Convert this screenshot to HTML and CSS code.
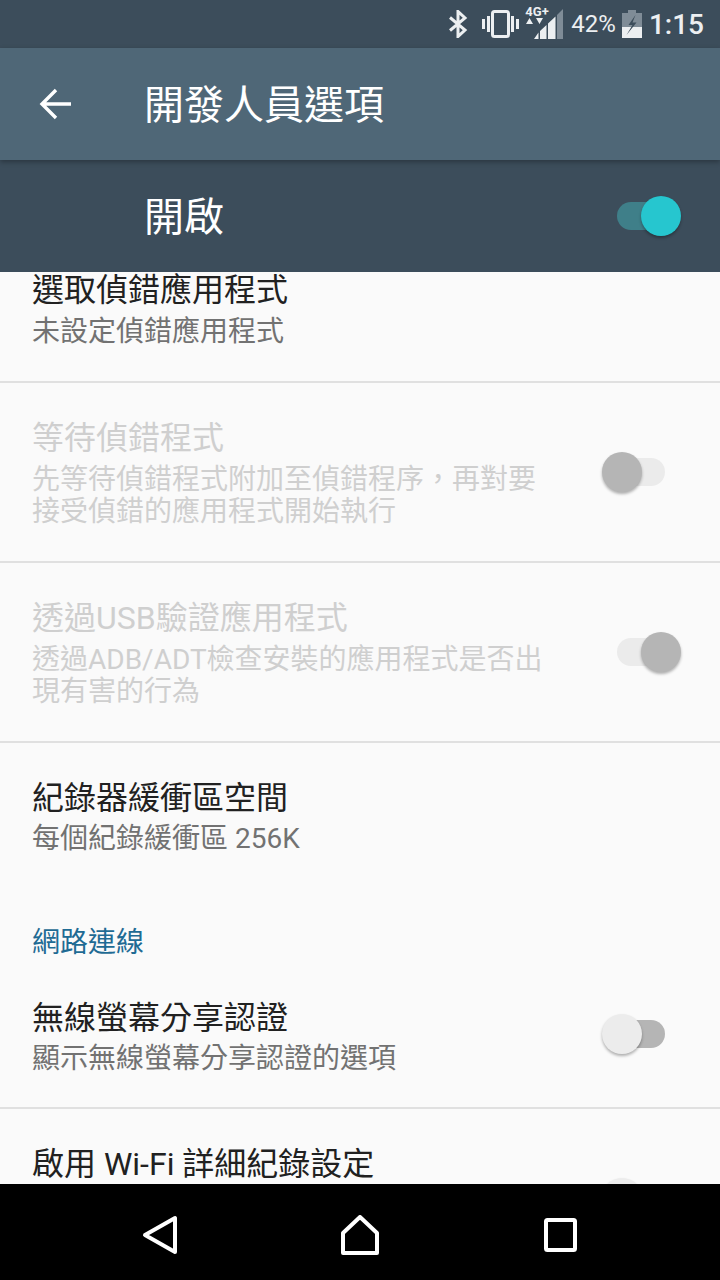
FILE: index.html
```html
<!DOCTYPE html>
<html>
<head>
<meta charset="utf-8"/>
<title>開發人員選項</title>
<link rel="stylesheet" href="styles.css">
</head>
<body>

<div class="statusbar">
	<svg class="ic-bt" width="20" height="28" viewBox="0 0 20 28"><path d="M2 7.500L17 20L10 26.500V1.500L17 8L2 20.500" fill="none" stroke="#eceff1" stroke-width="3"/></svg>
	<svg class="ic-vib" width="37" height="28" viewBox="0 0 37 28"><rect x="10.500" y="1.500" width="16" height="25" rx="2" fill="none" stroke="#eceff1" stroke-width="3"/><path d="M0 9h3v10H0zM5 6h3v16H5zM29 6h3v16h-3zM34 9h3v10h-3z" fill="#eceff1"/></svg>
	<div class="ic-net">
		<span class="net-label">4G+</span>
		<svg width="38" height="32" viewBox="0 0 38 32"><path d="M38 1V31H32V7z" fill="#7f8c97"/><path d="M30.500 8.500V31H23V15.500zM21.500 17V31H15V23zM13.500 24.500V31H9z" fill="#eceff1"/><path d="M1 16L4.500 10L8 16zM11 10L14.500 16L18 10z" fill="#eceff1"/></svg>
	</div>
	<span class="batt-pct">42%</span>
	<svg class="ic-batt" width="20" height="28" viewBox="0 0 20 28"><path d="M6 0h8v3h6v25H0V3h6z" fill="#7f8c97"/><path d="M0 17H20V28H0z" fill="#eceff1"/><path d="M13.500 5L6.500 15H10.500L4.500 25L14.500 12.500H10.500z" fill="#3c4d5b"/></svg>
	<span class="clock">1:15</span>
</div>

<div class="appbar">
	<svg class="ic-back" width="34" height="34" viewBox="0 0 34 34"><path d="M32 17H4M17 3L3 17L17 31" fill="none" stroke="#fff" stroke-width="3.400"/></svg>
	<span class="appbar-title">開發人員選項</span>
</div>

<div class="masterbar">
	<span class="master-label">開啟</span>
	<div class="switch on"><div class="thumb"></div></div>
</div>

<div class="list">
	<div class="list-inner">
		<div class="row">
			<div class="row-text">
				<div class="row-title">選取偵錯應用程式</div>
				<div class="row-sub">未設定偵錯應用程式</div>
			</div>
		</div>
		<div class="row disabled">
			<div class="row-text">
				<div class="row-title">等待偵錯程式</div>
				<div class="row-sub">先等待偵錯程式附加至偵錯程序，再對要接受偵錯的應用程式開始執行</div>
			</div>
			<div class="switch off"><div class="thumb"></div></div>
		</div>
		<div class="row disabled">
			<div class="row-text">
				<div class="row-title">透過USB驗證應用程式</div>
				<div class="row-sub">透過ADB/ADT檢查安裝的應用程式是否出現有害的行為</div>
			</div>
			<div class="switch on"><div class="thumb"></div></div>
		</div>
		<div class="row last">
			<div class="row-text">
				<div class="row-title">紀錄器緩衝區空間</div>
				<div class="row-sub">每個紀錄緩衝區 256K</div>
			</div>
		</div>
		<div class="category">網路連線</div>
		<div class="row short">
			<div class="row-text">
				<div class="row-title">無線螢幕分享認證</div>
				<div class="row-sub">顯示無線螢幕分享認證的選項</div>
			</div>
			<div class="switch off"><div class="thumb"></div></div>
		</div>
		<div class="row tall">
			<div class="row-text">
				<div class="row-title">啟用 Wi-Fi 詳細紀錄設定</div>
			</div>
			<div class="switch off"><div class="thumb"></div></div>
		</div>
	</div>
</div>

<div class="navbar">
	<svg width="36" height="40" viewBox="0 0 36 40"><path d="M33 3V37L3 20z" fill="none" stroke="#fff" stroke-width="4" stroke-linejoin="round"/></svg>
	<svg width="38" height="40" viewBox="0 0 38 40"><path d="M19 2L36 18V38H2V18z" fill="none" stroke="#fff" stroke-width="4" stroke-linejoin="round"/></svg>
	<svg width="34" height="34" viewBox="0 0 34 34"><rect x="3" y="2" width="29" height="30" rx="1.500" fill="none" stroke="#fff" stroke-width="4"/></svg>
</div>

</body>
</html>
```

FILE: styles.css
```css
html, body {
	margin: 0;
	padding: 0;
}
body {
	width: 720px;
	height: 1280px;
	overflow: hidden;
	display: flex;
	flex-direction: column;
	background: #fafafa;
	font-family: Roboto, "Noto Sans CJK TC", sans-serif;
}

/* status bar */
.statusbar {
	height: 48px;
	flex: none;
	display: flex;
	align-items: center;
	justify-content: flex-end;
	padding-right: 16px;
	background: #3c4d5b;
	color: #eceff1;
}
.ic-bt {
	margin-right: 14px;
}
.ic-vib {
	margin-right: 6px;
}
.ic-net {
	position: relative;
	width: 38px;
	height: 32px;
	margin-right: 8px;
}
.ic-net svg {
	display: block;
}
.net-label {
	position: absolute;
	left: 0;
	top: -4px;
	font-size: 13px;
	font-weight: 700;
	line-height: 15px;
}
.batt-pct {
	font-size: 24px;
	margin-right: 6px;
}
.clock {
	font-size: 28px;
	font-weight: 500;
	margin-left: 7px;
}

/* app bar */
.appbar {
	height: 112px;
	flex: none;
	display: flex;
	align-items: center;
	position: relative;
	z-index: 2;
	background: #4f6777;
	box-shadow: 0 2px 5px rgba(0, 0, 0, .3);
	color: #fff;
}
.ic-back {
	margin-left: 39px;
	margin-right: 71px;
}
.appbar-title {
	font-size: 40px;
	margin-bottom: 4px;
}
.masterbar {
	height: 112px;
	flex: none;
	display: flex;
	align-items: center;
	justify-content: space-between;
	padding-right: 55px;
	background: #3c4d5b;
	color: #fff;
}
.master-label {
	font-size: 40px;
	margin-left: 144px;
	margin-bottom: 4px;
}

/* list */
.list {
	flex: 1;
	min-height: 0;
	overflow: hidden;
	background: #fafafa;
}
.list-inner {
	margin-top: -37px;
}
.row {
	display: flex;
	align-items: center;
	justify-content: space-between;
	padding: 33px 55px 33px 32px;
	border-bottom: 2px solid #e0e0e0;
}
.row.last {
	border-bottom: none;
	padding-bottom: 34px;
}
.row.short {
	padding-bottom: 32px;
}
.row.last .row-sub, .row.short .row-sub {
	margin-top: 3px;
}
.row.short .switch {
	margin-top: -3px;
}
.row.tall {
	align-items: flex-start;
}
.row.tall .switch {
	margin-top: 42px;
}
.row-text {
	width: 512px;
}
.row-title {
	font-size: 32px;
	line-height: 44px;
	color: #212121;
}
.row-sub {
	font-size: 28px;
	line-height: 32px;
	margin-top: 4px;
	color: #727272;
}
.disabled .row-title, .disabled .row-sub {
	color: #cfcfcf;
}
.category {
	font-size: 28px;
	line-height: 32px;
	padding: 38px 32px 4px;
	color: #1f6b94;
}

/* switch */
.switch {
	position: relative;
	flex: none;
	width: 48px;
	height: 28px;
	border-radius: 14px;
	background: #b5b5b5;
}
.thumb {
	position: absolute;
	top: -6px;
	width: 40px;
	height: 40px;
	border-radius: 50%;
	background: #ececec;
	box-shadow: 0 2px 3px rgba(0, 0, 0, .3);
}
.switch.on .thumb {
	right: -16px;
}
.switch.off .thumb {
	left: -15px;
}
.disabled .switch {
	background: #ebebeb;
}
.disabled .thumb {
	background: #b5b5b5;
}
.masterbar .switch {
	background: #3f7f89;
}
.masterbar .thumb {
	background: #26c6cf;
}

/* nav */
.navbar {
	height: 96px;
	flex: none;
	box-sizing: border-box;
	position: relative;
	z-index: 2;
	display: grid;
	grid-template-columns: repeat(3, 200px);
	justify-content: center;
	justify-items: center;
	align-items: center;
	padding-top: 6px;
	background: #000;
}
```
